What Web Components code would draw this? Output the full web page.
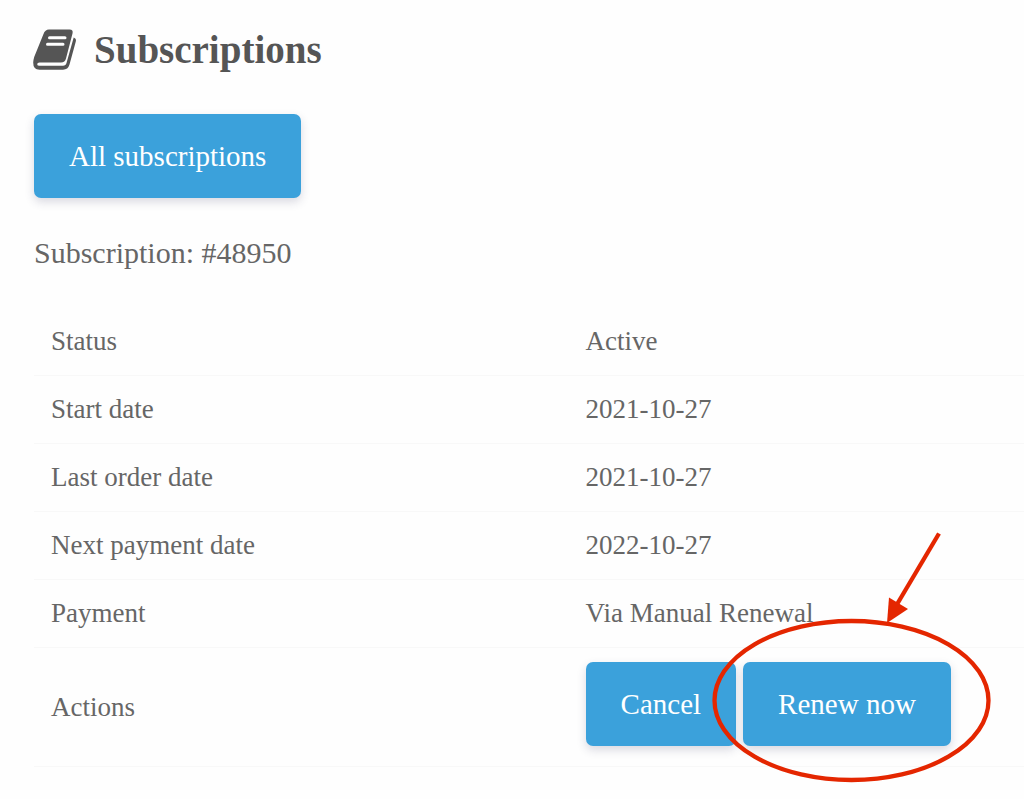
<!DOCTYPE html>
<html lang="en">
<head>
  <meta charset="UTF-8">
  <meta name="viewport" content="width=device-width, initial-scale=1">
  <title>Subscriptions</title>
<style>
:root {
  --text-color: #666;
  --heading-color: #555;
  --button-color: #3ba1db;
  --border-color: #f8f8f8;
  --mark-color: #e42600;
}

body {
  margin: 0;
  background: #fefefe;
  color: var(--text-color);
  font-family: "Liberation Serif", serif;
}
</style>
</head>
<body>
<subscription-page>
  <page-title slot="title">Subscriptions</page-title>
  <link-button slot="nav" href="#subscriptions">All subscriptions</link-button>
  <span slot="name">Subscription: #48950</span>

  <subscription-details>
    <span slot="status">Active</span>
    <span slot="start">2021-10-27</span>
    <span slot="last">2021-10-27</span>
    <span slot="next">2022-10-27</span>
    <span slot="payment">Via Manual Renewal</span>
    <link-button slot="actions" href="#cancel">Cancel</link-button>
    <callout-mark slot="actions">
      <link-button href="#renew">Renew now</link-button>
    </callout-mark>
  </subscription-details>
</subscription-page>

<script>
class BaseElement extends HTMLElement {
  constructor() {
    super();
    const template = document.createElement("template");
    template.innerHTML = this.constructor.markup;
    this.attachShadow({ mode: "open" });
    this.shadowRoot.appendChild(template.content.cloneNode(true));
  }
}

class SubscriptionPage extends BaseElement {
  static markup = `
    <style>
      :host {
        display: block;
        padding: 29px 0 32px 34px;
      }
      nav {
        display: flex;
        margin-top: 43px;
      }
      p {
        margin: 37px 0;
        font-size: 30px;
        line-height: 36px;
      }
    </style>
    <slot name="title"></slot>
    <nav><slot name="nav"></slot></nav>
    <p><slot name="name"></slot></p>
    <slot></slot>
  `;
}

class PageTitle extends BaseElement {
  static markup = `
    <style>
      :host {
        display: block;
        color: var(--heading-color);
      }
      h1 {
        display: flex;
        align-items: center;
        gap: 17px;
        margin: 0;
        font-size: 39px;
        line-height: 42px;
      }
      svg {
        flex: none;
        width: 43px;
        height: 41px;
        overflow: visible;
      }
    </style>
    <h1>
      <svg viewBox="1 1 43 41" aria-hidden="true">
        <path fill="currentColor" d="M16 .5H36.500Q40.500 .5 39.500 4.500L33 29.500Q32 33.600 28 33.600H6.500Q4.200 33.600 4.200 35.200T6.500 36.800H30Q32.800 36.800 33.500 34L40.700 8.500Q43.600 9.500 42.800 12.500L36.500 35.500Q35 40.700 30 40.700H6.500Q.1 40.700 .2 33.500Q.3 31 1.200 28L10.500 5Q12 .5 16 .5Z"/>
        <path fill="none" stroke="#fefefe" stroke-width="3" stroke-linecap="round" d="M16.500 8.700H32M14.500 15.200H30"/>
      </svg>
      <slot></slot>
    </h1>
  `;
}

class LinkButton extends BaseElement {
  static markup = `
    <style>
      :host {
        display: inline-block;
      }
      a {
        display: block;
        padding: 24px 35px;
        border-radius: 7px;
        background: var(--button-color);
        box-shadow: 0 4px 10px rgba(50, 50, 93, 0.18);
        color: white;
        font-size: 29px;
        line-height: 36px;
        text-decoration: none;
        white-space: nowrap;
      }
    </style>
    <a><slot></slot></a>
  `;

  connectedCallback() {
    this.shadowRoot.querySelector("a").href = this.getAttribute("href");
  }
}

class SubscriptionDetails extends BaseElement {
  static markup = `
    <style>
      :host {
        display: block;
      }
      table {
        width: 100%;
        border-collapse: separate;
        border-spacing: 0;
        font-size: 27px;
        line-height: 34px;
      }
      th, td {
        padding: 16px 17px 17px;
        border-bottom: 1px solid var(--border-color);
        font-weight: normal;
        text-align: left;
        vertical-align: middle;
      }
      th {
        width: 54%;
        box-sizing: border-box;
      }
      td.actions {
        padding-top: 14px;
        padding-bottom: 20px;
      }
      .actions div {
        display: flex;
        gap: 7px;
      }
    </style>
    <table>
      <tbody>
        <tr><th scope="row">Status</th><td><slot name="status"></slot></td></tr>
        <tr><th scope="row">Start date</th><td><slot name="start"></slot></td></tr>
        <tr><th scope="row">Last order date</th><td><slot name="last"></slot></td></tr>
        <tr><th scope="row">Next payment date</th><td><slot name="next"></slot></td></tr>
        <tr><th scope="row">Payment</th><td><slot name="payment"></slot></td></tr>
        <tr><th scope="row">Actions</th><td class="actions"><div><slot name="actions"></slot></div></td></tr>
      </tbody>
    </table>
  `;
}

// Circles whatever is slotted in and points an arrow at it
class CalloutMark extends BaseElement {
  static markup = `
    <style>
      :host {
        display: inline-block;
        position: relative;
      }
      svg {
        position: absolute;
        top: -134px;
        left: -35px;
        width: 288px;
        height: 260px;
        pointer-events: none;
      }
    </style>
    <slot></slot>
    <svg viewBox="0 0 288 260" aria-hidden="true" fill="none" stroke="var(--mark-color)" stroke-width="4.300">
      <ellipse cx="143.500" cy="172.500" rx="137" ry="79.500"/>
      <path d="M231 5.500L188 78"/>
      <path d="M179 95L181 69.500L200 81Z" fill="var(--mark-color)" stroke="none"/>
    </svg>
  `;
}

customElements.define("subscription-page", SubscriptionPage);
customElements.define("page-title", PageTitle);
customElements.define("link-button", LinkButton);
customElements.define("subscription-details", SubscriptionDetails);
customElements.define("callout-mark", CalloutMark);
</script>
</body>
</html>
